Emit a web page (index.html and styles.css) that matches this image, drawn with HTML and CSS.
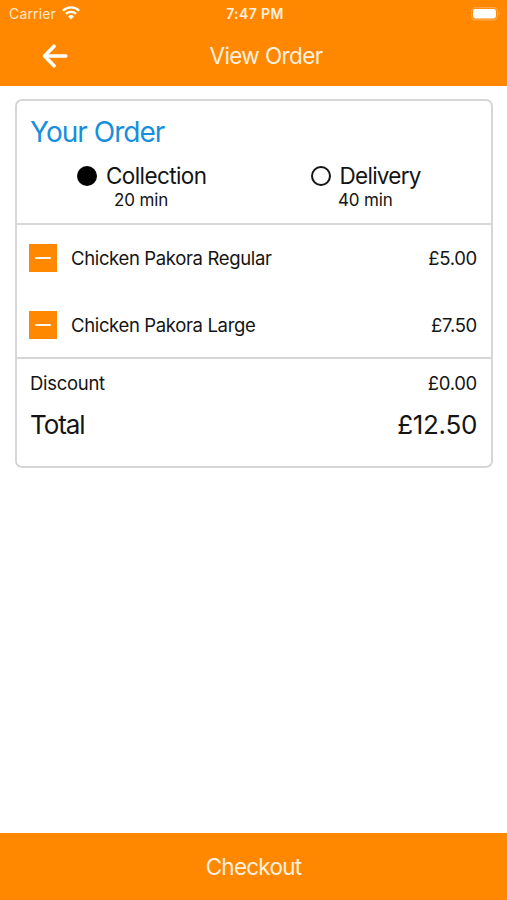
FILE: index.html
```html
<!DOCTYPE html>
<html lang="en">
<head>
<meta charset="utf-8">
<title>View Order</title>
<link rel="stylesheet" href="styles.css">
</head>
<body>
<header class="top">
  <div class="status">
    <div class="carrier"><span>Carrier</span>
      <svg class="wifi" width="18" height="14" viewBox="0 0 18 14"><g fill="none" stroke="#fff" stroke-width="2.3"><path d="M.9 4.7a11.5 11.5 0 0 1 16.2 0"/><path d="M3.9 7.9a7.2 7.2 0 0 1 10.2 0"/></g><path fill="#fff" d="M6 10.4a4.3 4.3 0 0 1 6 0l-3 3z"/></svg>
    </div>
    <div class="time">7:47 PM</div>
    <div class="power"><svg width="30" height="14" viewBox="0 0 30 14"><rect x=".6" y=".6" width="25.8" height="12.3" rx="3.6" fill="none" stroke="#ffa84a" stroke-width="1.1"/><rect x="2" y="2" width="23" height="9.5" rx="2.4" fill="#fff"/><path d="M27.7 4.8q3 2 0 4z" fill="#ffa84a"/></svg></div>
  </div>
  <nav class="nav">
    <button class="back" aria-label="Back"><svg width="26" height="24" viewBox="0 0 26 24" fill="none" stroke="#fff" stroke-width="3.6" stroke-linecap="round" stroke-linejoin="round"><path d="M23.8 12H2.6M12 2.2L2.6 12l9.4 9.8"/></svg></button>
    <h1 class="title">View Order</h1>
  </nav>
</header>
<main class="content">
  <section class="card">
    <div class="summary">
      <h2 class="heading">Your Order</h2>
      <div class="options">
        <div class="option collection"><div class="choice"><i class="radio on"></i><span>Collection</span></div><div class="wait">20 min</div></div>
        <div class="option delivery"><div class="choice"><i class="radio"></i><span>Delivery</span></div><div class="wait">40 min</div></div>
      </div>
    </div>
    <div class="items">
      <div class="item"><button class="minus" aria-label="Remove"></button><span class="name">Chicken Pakora Regular</span><span class="price">£5.00</span></div>
      <div class="item"><button class="minus" aria-label="Remove"></button><span class="name">Chicken Pakora Large</span><span class="price">£7.50</span></div>
    </div>
    <div class="totals">
      <div class="discount"><span>Discount</span><span class="price">£0.00</span></div>
      <div class="total"><span class="label">Total</span><span class="amount">£12.50</span></div>
    </div>
  </section>
</main>
<button class="checkout">Checkout</button>
</body>
</html>
```
FILE: styles.css
```css
* { box-sizing: border-box; }
html, body { height: 100%; }
body { margin: 0; display: flex; flex-direction: column; background: #fff; color: #141414; font-family: Inter, "Liberation Sans", sans-serif; }
h1, h2 { margin: 0; font-weight: 400; }
button { border: 0; padding: 0; font: inherit; color: #fff; background: #ff8800; }
svg { display: block; }
.top { height: 86px; flex: none; background: #ff8800; color: #fff; }
.status { height: 27px; display: grid; grid-template-columns: 1fr auto 1fr; align-items: center; padding: 0 6px 0 9px; font-size: 14px; }
.carrier { display: flex; align-items: center; gap: 6px; color: #ffe7cb; letter-spacing: .15px; }
.wifi { margin-top: -2px; }
.time { font-weight: 600; color: #fff0df; letter-spacing: .4px; }
.power { justify-self: end; }
.nav { height: 57px; display: grid; grid-template-columns: 80px 1fr 55px; align-items: center; }
.back { padding-left: 41.5px; }
.title { text-align: center; font-size: 22.5px; line-height: 57px; letter-spacing: -.6px; color: #fff0df; }
.content { flex: 1; padding: 13px 14px 0 15px; }
.card { height: 369px; border: 2px solid #d6d6d6; border-radius: 7px; }
.summary { height: 124px; border-bottom: 2px solid #d6d6d6; }
.heading { padding: 14px 0 0 13px; font-size: 28px; line-height: 34px; letter-spacing: -.98px; color: #168fdf; }
.options { display: grid; grid-template-columns: 1fr 1fr; padding-top: 13px; }
.option { padding-left: 60px; }
.delivery { padding-left: 57px; }
.choice { display: flex; align-items: center; gap: 9px; font-size: 22.5px; line-height: 28px; letter-spacing: -.6px; }
.delivery .choice { gap: 8.5px; letter-spacing: -.72px; }
.radio { width: 20px; height: 20px; border: 2px solid #141414; border-radius: 50%; }
.on { background: #000; border-color: #000; }
.wait { padding-left: 37px; font-size: 17px; line-height: 20px; letter-spacing: -.15px; }
.delivery .wait { padding-left: 27px; }
.items { height: 134px; border-bottom: 2px solid #d6d6d6; }
.item { height: 67px; display: flex; align-items: center; padding: 0 14px 2px 12px; font-size: 18.5px; letter-spacing: -.35px; }
.minus { width: 28px; height: 28px; display: grid; place-items: center; margin-right: 14px; }
.minus::before { content: ""; width: 16px; height: 2px; border-radius: 1px; background: #fff5ea; }
.name { flex: none; }
.price, .amount { margin-left: auto; letter-spacing: -.3px; }
.totals { padding: 11px 14px 0 13px; }
.discount, .total { display: flex; align-items: center; letter-spacing: -.3px; }
.discount { height: 26px; font-size: 18.5px; }
.total { height: 56px; font-size: 26px; }
.label { letter-spacing: -1.1px; }
.checkout { height: 67px; flex: none; font-size: 22.5px; letter-spacing: -.75px; color: #fff0df; }
```
